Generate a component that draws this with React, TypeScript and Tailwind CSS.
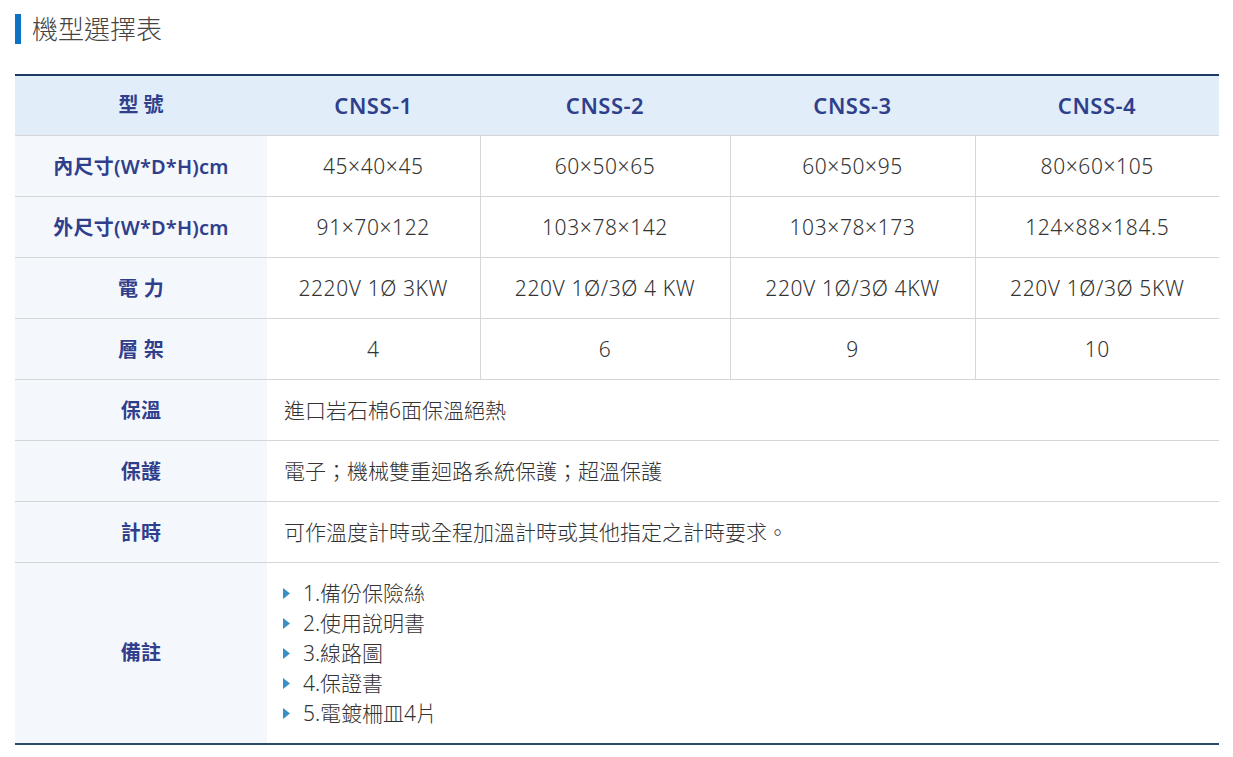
import { FC } from "react";

const FONT = "font-['Noto_Sans','Noto_Sans_CJK_TC',sans-serif]";

const MODELS = ["CNSS-1", "CNSS-2", "CNSS-3", "CNSS-4"] as const;

const SPEC_ROWS = [
  { label: "內尺寸(W*D*H)cm", values: ["45×40×45", "60×50×65", "60×50×95", "80×60×105"] },
  { label: "外尺寸(W*D*H)cm", values: ["91×70×122", "103×78×142", "103×78×173", "124×88×184.5"] },
  { label: "電 力", values: ["2220V 1Ø 3KW", "220V 1Ø/3Ø 4 KW", "220V 1Ø/3Ø 4KW", "220V 1Ø/3Ø 5KW"] },
  { label: "層 架", values: ["4", "6", "9", "10"] },
];

const WIDE_ROWS = [
  { label: "保溫", text: "進口岩石棉6面保溫絕熱" },
  { label: "保護", text: "電子；機械雙重迴路系統保護；超溫保護" },
  { label: "計時", text: "可作溫度計時或全程加溫計時或其他指定之計時要求。" },
];

const NOTES = ["1.備份保險絲", "2.使用說明書", "3.線路圖", "4.保證書", "5.電鍍柵皿4片"];

const LABEL_CELL = "bg-[#f4f7fc] text-[#2f3f8c] font-semibold text-[20px] text-center align-middle tracking-[0.2px]";

const App: FC = () => {
  return (
    <div className={`${FONT} bg-white w-[1233px] h-[757px] overflow-hidden`}>
      <div className="px-[15px] pt-[14px]">
        <h2 className="flex items-center h-[30px] text-[26px] text-[#444] font-light">
          <span className="inline-block w-[6px] h-[30px] bg-[#0b72c4] mr-[11px]" />
          機型選擇表
        </h2>

        <table className="mt-[30px] w-[1204px] table-fixed border-collapse border-t-2 border-b-2 border-t-[#1d3a64] border-b-[#2b4a6b]">
          <colgroup>
            <col className="w-[252px]" />
            <col className="w-[213px]" />
            <col className="w-[250px]" />
            <col className="w-[245px]" />
            <col className="w-[244px]" />
          </colgroup>
          <thead>
            <tr className="h-[60px] bg-[#e1edf9]">
              <th className="text-[20px] font-semibold text-[#2f3f8c] text-center">型 號</th>
              {MODELS.map((m) => (
                <th key={m} className="text-[22px] font-semibold text-[#2f3f8c] text-center tracking-[0.5px]">
                  {m}
                </th>
              ))}
            </tr>
          </thead>
          <tbody>
            {SPEC_ROWS.map((row) => (
              <tr key={row.label} className="h-[61px] border-t border-[#d6d6d6]">
                <td className={`${LABEL_CELL} pt-[3px]`}>{row.label}</td>
                {row.values.map((v, i) => (
                  <td
                    key={i}
                    className={`text-center text-[21px] font-light text-[#333] pt-[3px] tracking-[0.6px] ${i > 0 ? "border-l border-[#d6d6d6]" : ""}`}
                  >
                    {v}
                  </td>
                ))}
              </tr>
            ))}
            {WIDE_ROWS.map((row) => (
              <tr key={row.label} className="h-[61px] border-t border-[#d6d6d6]">
                <td className={`${LABEL_CELL} pt-[3px]`}>{row.label}</td>
                <td colSpan={4} className="pl-[17px] pt-[3px] text-[21px] font-light text-[#333]">
                  {row.text}
                </td>
              </tr>
            ))}
            <tr className="border-t border-[#d6d6d6]">
              <td className={LABEL_CELL}>備註</td>
              <td colSpan={4} className="pl-[16px] pt-[16px] pb-[14px]">
                <ul>
                  {NOTES.map((n) => (
                    <li key={n} className="flex items-center h-[30px] text-[21px] font-light text-[#333]">
                      <svg width="7" height="11" viewBox="0 0 7 11" className="mr-[13px]">
                        <path d="M0 0 L7 5.5 L0 11 Z" fill="#3a8fc4" />
                      </svg>
                      {n}
                    </li>
                  ))}
                </ul>
              </td>
            </tr>
          </tbody>
        </table>
      </div>
    </div>
  );
};

export default App;
